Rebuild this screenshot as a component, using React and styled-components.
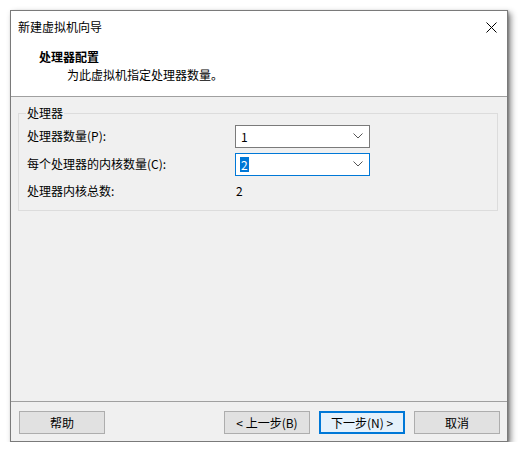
import React from "react";
import styled, { createGlobalStyle } from "styled-components";

const Global = createGlobalStyle`
  html, body { margin: 0; padding: 0; background: #ffffff; }
  body { font-family: "Noto Sans CJK SC", "Microsoft YaHei", sans-serif; font-size: 12px; color: #000; }
  * { box-sizing: border-box; }
`;

const Window = styled.div`
  margin: 10px 0 0 10px;
  width: 498px;
  height: 432px;
  border: 1px solid #7a7a7a;
  background: #f0f0f0;
  box-shadow: 3px 3px 6px rgba(0,0,0,0.45), 1px 1px 2px rgba(0,0,0,0.25);
  display: flex;
  flex-direction: column;
`;

const TitleBar = styled.div`
  height: 30px;
  background: #fff;
  display: flex;
  align-items: center;
  justify-content: space-between;
  padding: 0 0 0 7px;
`;

const TitleText = styled.div`
  font-size: 12px;
  line-height: 16px;
  margin-top: 2px;
`;

const CloseButton = styled.div`
  width: 30px;
  height: 30px;
  display: flex;
  align-items: center;
  justify-content: center;
  margin-right: 1px;
  margin-top: 2px;
`;

const Header = styled.div`
  height: 56px;
  background: #fff;
  border-bottom: 1px solid #a0a0a0;
  padding: 7px 0 0 28px;
  display: flex;
  flex-direction: column;
`;

const HeaderTitle = styled.div`
  font-weight: bold;
  line-height: 18px;
`;

const HeaderSub = styled.div`
  line-height: 18px;
  padding-left: 28px;
`;

const Body = styled.div`
  flex: 1;
  padding: 9px 9px 0 7px;
`;

const Group = styled.fieldset`
  margin: 0;
  border: 1px solid #dcdcdc;
  padding: 2px 0 6px 8px;
  min-height: 96px;
  display: flex;
  flex-direction: column;
`;

const Legend = styled.legend`
  padding: 0 1px;
  margin-left: -1px;
  line-height: 14px;
`;

const Row = styled.div`
  display: flex;
  align-items: center;
  height: ${p => p.$h || 28}px;
`;

const Label = styled.div`
  width: 208px;
  line-height: 16px;
`;

const Combo = styled.div`
  width: 135px;
  height: 23px;
  background: #fff;
  border: 1px solid ${p => (p.$focused ? "#0078d7" : "#7a7a7a")};
  display: flex;
  align-items: center;
  justify-content: space-between;
  padding: 0 6px 0 4px;
`;

const Value = styled.span`
  line-height: 15px;
  padding: 0 1px;
  background: ${p => (p.$selected ? "#0078d7" : "transparent")};
  color: ${p => (p.$selected ? "#fff" : "#000")};
`;

const Plain = styled.div`
  padding-left: 1px;
  line-height: 16px;
`;

const Footer = styled.div`
  border-top: 1px solid #a0a0a0;
  height: 40px;
  display: flex;
  align-items: flex-start;
  padding: 9px 7px 0 8px;
  gap: 9px;
`;

const Spacer = styled.div`
  flex: 1;
`;

const Button = styled.button`
  width: 86px;
  height: 23px;
  margin: 0;
  padding: 0;
  font-family: inherit;
  font-size: 12px;
  color: #000;
  background: ${p => (p.$default ? "#e5f1fb" : "#e1e1e1")};
  border: 1px solid ${p => (p.$default ? "#0078d7" : "#adadad")};
  box-shadow: ${p => (p.$default ? "inset 0 0 0 1px #0078d7" : "none")};
  line-height: 16px;
`;

const Chevron = () => (
  <svg width="10" height="6" viewBox="0 0 10 6">
    <path d="M0.5 0.5 L5 5 L9.5 0.5" fill="none" stroke="#555" strokeWidth="1" />
  </svg>
);

const CloseIcon = () => (
  <svg width="11" height="11" viewBox="0 0 11 11">
    <path d="M0.5 0.5 L10.5 10.5 M10.5 0.5 L0.5 10.5" stroke="#000" strokeWidth="1" />
  </svg>
);

export default function App() {
  return (
    <>
      <Global />
      <Window>
        <TitleBar>
          <TitleText>新建虚拟机向导</TitleText>
          <CloseButton><CloseIcon /></CloseButton>
        </TitleBar>
        <Header>
          <HeaderTitle>处理器配置</HeaderTitle>
          <HeaderSub>为此虚拟机指定处理器数量。</HeaderSub>
        </Header>
        <Body>
          <Group>
            <Legend>处理器</Legend>
            <Row>
              <Label>处理器数量(P):</Label>
              <Combo><Value>1</Value><Chevron /></Combo>
            </Row>
            <Row>
              <Label>每个处理器的内核数量(C):</Label>
              <Combo $focused><Value $selected>2</Value><Chevron /></Combo>
            </Row>
            <Row $h={26}>
              <Label>处理器内核总数:</Label>
              <Plain>2</Plain>
            </Row>
          </Group>
        </Body>
        <Footer>
          <Button>帮助</Button>
          <Spacer />
          <Button>&lt; 上一步(B)</Button>
          <Button $default>下一步(N) &gt;</Button>
          <Button>取消</Button>
        </Footer>
      </Window>
    </>
  );
}
